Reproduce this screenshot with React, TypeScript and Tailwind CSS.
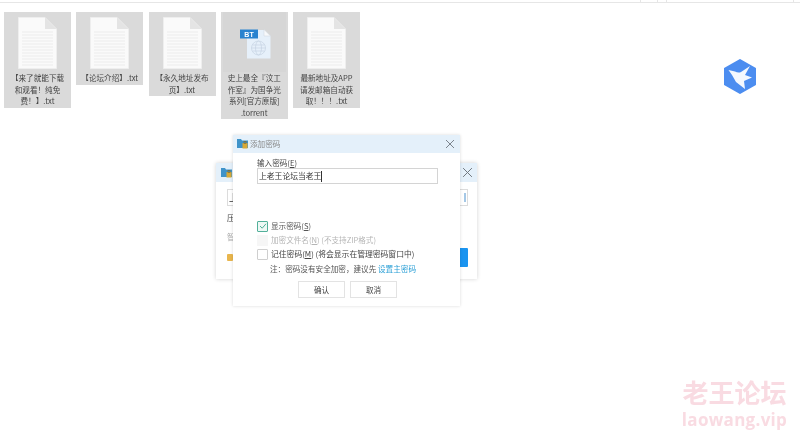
const font = { fontFamily: '"Noto Sans CJK SC", "Liberation Sans", sans-serif' };

function TxtIcon() {
  return (
    <svg width="39" height="52" viewBox="0 0 39 52">
      <path d="M0.5 0.5H27L38.500 12V51.500H0.5Z" fill="#fafafa" stroke="#eeeeee" />
      <path d="M27 0.5V12H38.500Z" fill="#e4e4e4" />
      {[15, 18, 21, 24, 27, 30, 33, 36, 39, 42, 45, 48].map((y) => (
        <path key={y} d={`M4 ${y}H35`} stroke="#ececec" strokeWidth="1" />
      ))}
    </svg>
  );
}

function BtIcon() {
  return (
    <svg width="31" height="30" viewBox="0 0 31 30">
      <path d="M7 1H24L30.500 7V29.500H7Z" fill="#e6f0fa" />
      <path d="M24 0.5V7H30.500Z" fill="#f8f9fb" stroke="#cfd6de" strokeWidth="0.5" />
      <rect x="0" y="0.5" width="18" height="9" fill="#2a83cf" />
      <text x="9" y="7.500" textAnchor="middle" fontSize="7" fontWeight="700" fill="#ffffff" fontFamily="Liberation Sans">BT</text>
      <g fill="none" stroke="#c5d3e2" strokeWidth="0.7">
        <circle cx="18.500" cy="19" r="7" />
        <ellipse cx="18.500" cy="19" rx="3" ry="7" />
        <path d="M11.500 19H25.500M12.500 16H24.500M12.500 22H24.500" />
      </g>
    </svg>
  );
}

function FileTile({ lines, torrent }: { lines: string[]; torrent?: boolean }) {
  return (
    <div className="flex w-[67px] flex-col items-center bg-[#dadada]">
      {torrent ? (
        <div className="flex h-[60px] w-[63px] items-start justify-center bg-[#d6d6d6] pl-[3px] pt-[17px]">
          <BtIcon />
        </div>
      ) : (
        <div className="flex h-[60px] items-start pt-[5px]">
          <TxtIcon />
        </div>
      )}
      <div className="flex flex-col items-center pb-[1px] text-[7.6px] leading-[11.5px] text-[#444]">
        {lines.map((l) => (
          <span key={l} className="whitespace-nowrap">{l}</span>
        ))}
      </div>
    </div>
  );
}

function Folder() {
  return (
    <svg width="11" height="11" viewBox="0 0 11 11">
      <path d="M0 1H4L5 2.500H11V10H0Z" fill="#3f93c9" />
      <rect x="5.500" y="5" width="5" height="5.500" fill="#d8a936" />
      <rect x="7" y="3.500" width="2" height="2" fill="none" stroke="#7d6a35" strokeWidth="0.7" />
    </svg>
  );
}

function Close({ size = 10 }: { size?: number }) {
  return (
    <svg width={size} height={size} viewBox="0 0 10 10">
      <path d="M1 1L9 9M9 1L1 9" stroke="#6f7780" strokeWidth="0.9" fill="none" />
    </svg>
  );
}

export default function App() {
  return (
    <div className="relative h-[434px] w-[800px] overflow-hidden bg-white blur-[0.35px]" style={font}>
      <div className="flex h-[3px] justify-end gap-[8px] border-b border-[#e6e6e6] pr-[6px]">
        <div className="w-[18px] border-x border-[#e6e6e6]" />
        <div className="w-[128px] border-x border-[#e6e6e6]" />
      </div>

      <div className="flex items-start gap-[5.25px] pl-[4px] pt-[9px]">
        <FileTile lines={["【来了就能下载", "和观看！纯免", "费！】.txt"]} />
        <FileTile lines={["【论坛介绍】.txt"]} />
        <FileTile lines={["【永久地址发布", "页】.txt"]} />
        <FileTile torrent lines={["史上最全『汶工", "作室』为国争光", "系列[官方原版]", ".torrent"]} />
        <FileTile lines={["最新地址及APP", "请发邮箱自动获", "取！！！.txt"]} />
      </div>

      {/* desktop icon */}
      <svg className="absolute left-[724px] top-[59px]" width="32" height="35" viewBox="0 0 32 35">
        <path d="M16 1L31 9.500V25.500L16 34L1 25.500V9.500Z" fill="#4c8df0" stroke="#4c8df0" strokeLinejoin="round" strokeWidth="2" />
        <path d="M4.500 11L11 12.500C13 13.500 15 14 17 13L26 7L21 16L28 18.500L20 22L21 30L12 23L8 16Z" fill="#f4f8fe" />
      </svg>

      {/* back dialog */}
      <div className="absolute left-[216px] top-[163px] flex h-[116px] w-[261px] flex-col bg-white shadow-[0_0_4px_rgba(0,0,0,0.18)]">
        <div className="flex h-[19px] items-center justify-between bg-[#e4f0fa] pl-[5px] pr-[4px]">
          <Folder />
          <Close size={11} />
        </div>
        <div className="flex flex-1 flex-col pl-[11px] pr-[9px] pt-[7px] text-[8px] text-[#444]">
          <div className="flex h-[17px] items-center justify-between border border-[#dcdcdc] pl-[1px] pr-[1px] text-[#333]">
            <span className="text-[9px]">上</span>
            <span className="h-[9px] w-[2px] bg-[#a5c8e6]" />
          </div>
          <div className="mt-[6px]">压</div>
          <div className="mt-[7px] text-[#aaa]">智</div>
          <div className="mt-[11px] flex items-start justify-between">
            <span className="h-[7px] w-[6px] rounded-[1px] bg-[#e9b64d]" />
            <span className="-mt-[6px] h-[19px] w-[8px] rounded-r-[1px] bg-[#1a94f0]" />
          </div>
        </div>
      </div>

      {/* front dialog */}
      <div className="absolute left-[233px] top-[135px] flex h-[171px] w-[227px] flex-col bg-white shadow-[0_0_3px_rgba(0,0,0,0.15)]">
        <div className="flex h-[18px] items-center justify-between bg-[#e4f0fa] pl-[4px] pr-[5px]">
          <div className="flex items-center gap-[2px] text-[7.6px] text-[#888]">
            <Folder />
            <span>添加密码</span>
          </div>
          <Close />
        </div>
        <div className="flex flex-1 flex-col pl-[24px] pr-[22px]">
          <div className="mt-[4px] h-[11px] text-[7.6px] leading-[11px] text-[#444]">输入密码(<span className="underline">E</span>)</div>
          <div className="flex h-[16px] items-center border border-[#d4d4d4] pl-[1px] text-[7.8px] text-[#333]">
            <span>上老王论坛当老王</span>
            <span className="h-[11px] w-px bg-[#333]" />
          </div>

          <div className="mt-[35px] flex h-[14px] items-center gap-[3px] text-[7.6px] text-[#555]">
            <span className="flex h-[11px] w-[11px] items-center justify-center rounded-[1px] border border-[#52b09a] bg-[#eef8f5]">
              <svg width="8" height="8" viewBox="0 0 8 8"><path d="M1 4L3.200 6.200L7 1.800" stroke="#52b09a" fill="none" /></svg>
            </span>
            <span>显示密码(<span className="underline">S</span>)</span>
          </div>
          <div className="flex h-[14px] items-center gap-[3px] text-[7.6px] text-[#b5b5b5]">
            <span className="h-[11px] w-[11px] bg-[#f6f6f6]" />
            <span>加密文件名(<span className="underline">N</span>) (不支持ZIP格式)</span>
          </div>
          <div className="flex h-[14px] items-center gap-[3px] whitespace-nowrap text-[7.8px] text-[#444]">
            <span className="h-[11px] w-[11px] rounded-[1px] border border-[#cfcfcf]" />
            <span>记住密码(<span className="underline">M</span>) (将会显示在管理密码窗口中)</span>
          </div>
          <div className="mt-[1px] h-[14px] whitespace-nowrap pl-[13px] text-[7.6px] leading-[14px] text-[#555]">
            注：密码没有安全加密，建议先 <span className="text-[#2a9fd6]">设置主密码</span>
          </div>
          <div className="mt-[5px] flex justify-center gap-[5px]">
            <div className="flex h-[17px] w-[47px] items-center justify-center border border-[#e3e3e3] text-[7.6px] text-[#444]">确认</div>
            <div className="flex h-[17px] w-[47px] items-center justify-center border border-[#e3e3e3] text-[7.6px] text-[#444]">取消</div>
          </div>
        </div>
      </div>

      {/* watermark */}
      <div className="absolute left-[681px] top-[377px] flex w-[107px] flex-col items-center">
        <span className="whitespace-nowrap text-[26px] font-bold leading-[29px] text-[#f9dbe2]">老王论坛</span>
        <span className="mt-[4px] whitespace-nowrap text-[17px] font-bold leading-[20px] tracking-[0.3px] text-[#f9dbe2]" style={{ fontFamily: '"Open Sans", sans-serif' }}>laowang.vip</span>
      </div>
    </div>
  );
}
